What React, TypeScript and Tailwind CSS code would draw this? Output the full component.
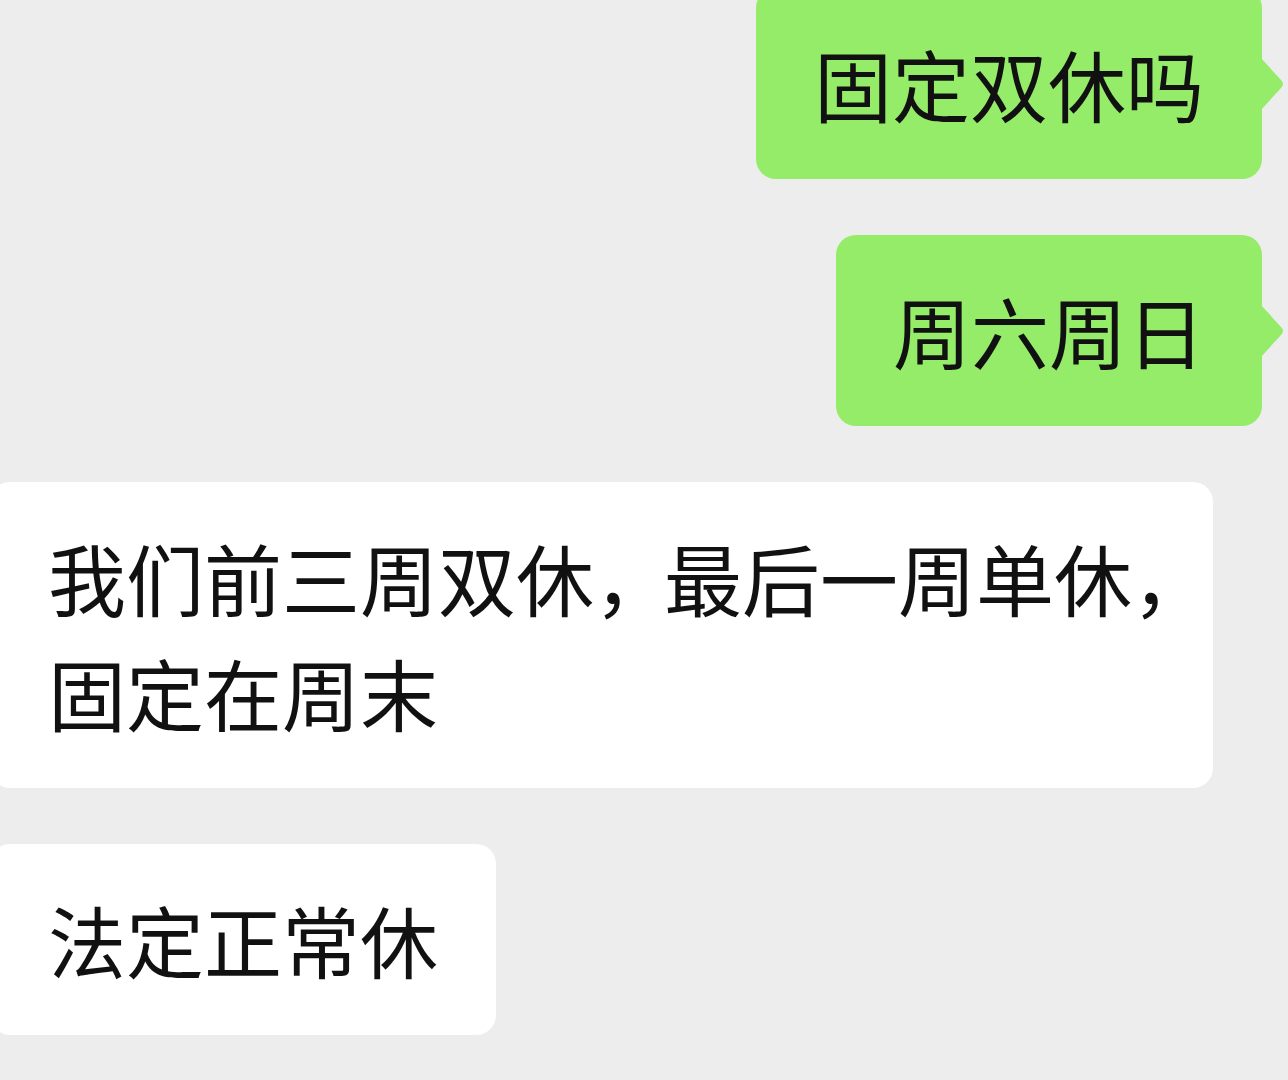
import React from "react";

function Tail() {
  return (
    <svg
      className="absolute right-[-23px] top-1/2 -translate-y-1/2"
      width="24"
      height="52"
      viewBox="0 0 24 52"
    >
      <path d="M0 0 L20 22 Q24 26 20 30 L0 52 Z" fill="#95ec69" />
    </svg>
  );
}

export default function App() {
  const font = {
    fontFamily: '"Noto Sans CJK SC", "Noto Sans", sans-serif',
  };
  return (
    <div
      className="w-[1288px] h-[1080px] overflow-hidden bg-[#ededed] text-[#111111]"
      style={font}
    >
      <div className="flex flex-col gap-[56px] pr-[26px] -mt-[12px]">
        <div className="flex justify-end">
          <div className="relative bg-[#95ec69] rounded-[20px] px-[58px] py-[38px] text-[78px] leading-[115px] whitespace-nowrap">
            固定双休吗
            <Tail />
          </div>
        </div>
        <div className="flex justify-end">
          <div className="relative bg-[#95ec69] rounded-[20px] px-[57px] py-[38px] text-[78px] leading-[115px] whitespace-nowrap">
            周六周日
            <Tail />
          </div>
        </div>
        <div className="flex justify-start">
          <div className="-ml-[10px] w-[1223px] bg-white rounded-[20px] pl-[58px] py-[38px] text-[78px] leading-[115px] whitespace-nowrap">
            我们前三周双休<span className="tracking-[-8px]">，</span>最后一周单休<span className="tracking-[-8px]">，</span>
            <br />
            固定在周末
          </div>
        </div>
        <div className="flex justify-start">
          <div className="-ml-[10px] bg-white rounded-[20px] pl-[58px] pr-[58px] py-[38px] text-[78px] leading-[115px] whitespace-nowrap">
            法定正常休
          </div>
        </div>
      </div>
    </div>
  );
}
